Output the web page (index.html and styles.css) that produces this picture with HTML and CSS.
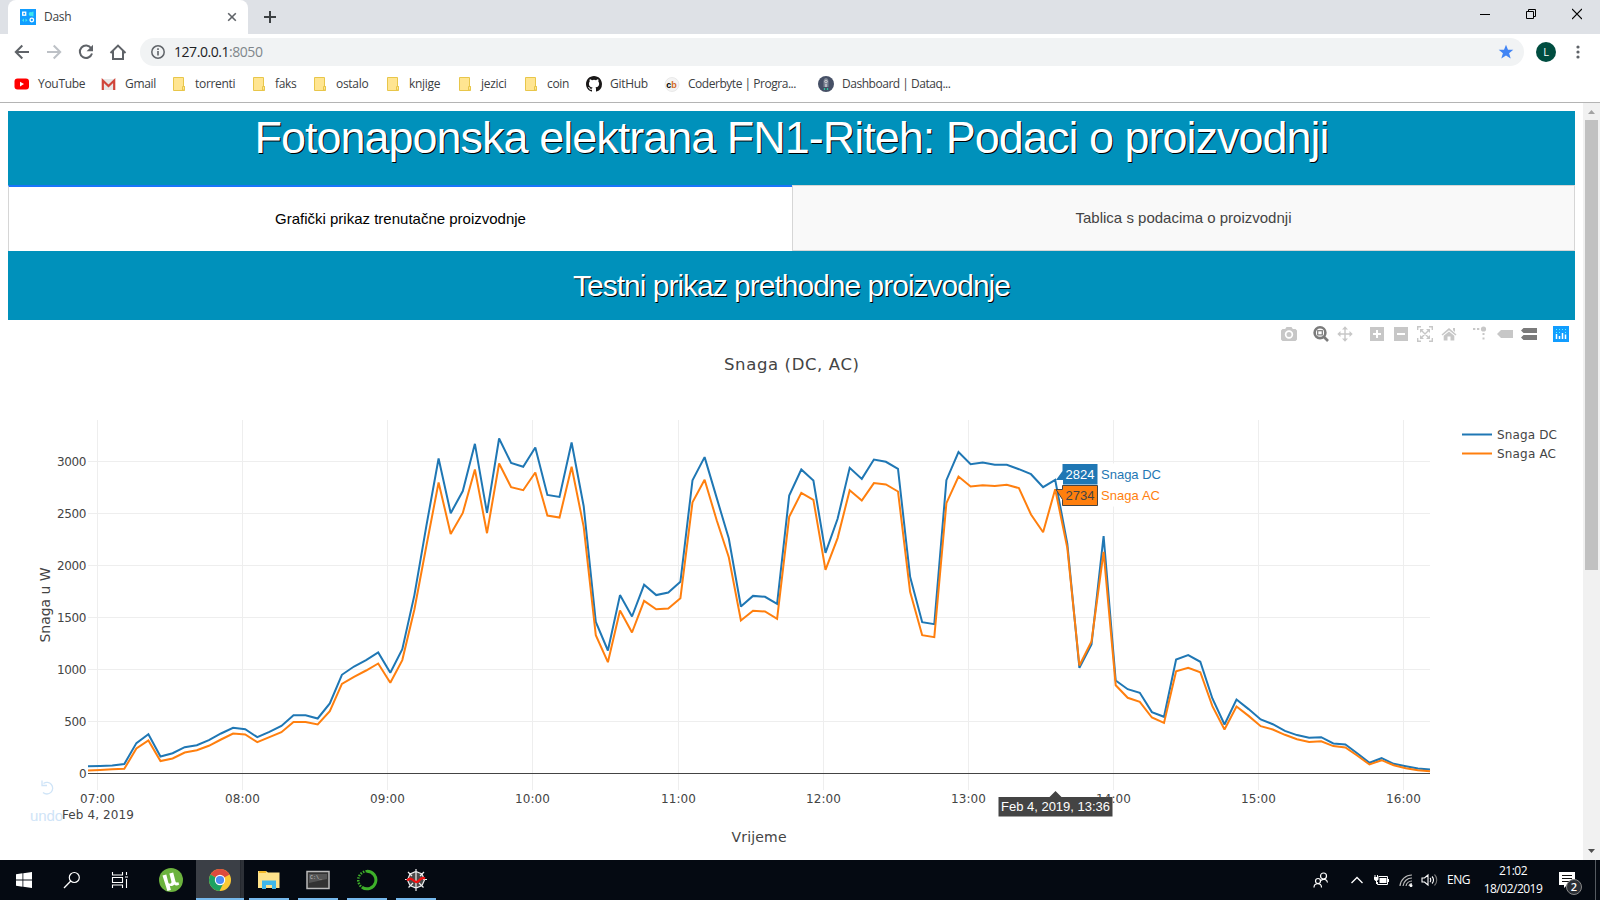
FILE: index.html
```html
<!DOCTYPE html>
<html lang="hr">
<head>
<meta charset="utf-8">
<title>Dash</title>
<link rel="stylesheet" href="styles.css">
</head>
<body>
<div class="tabstrip">
  <div class="browser-tab">
    <svg class="favicon" width="16" height="16" viewBox="0 0 16 16"><rect width="16" height="16" fill="#119dff"/><rect x="2.7" y="3.2" width="3" height="3" fill="none" stroke="#fff" stroke-width="1.3"/><path d="M13.5 2.5a2.5 2.5 0 0 0 0 5z" fill="#40e6f0"/><circle cx="10.6" cy="5" r="1.9" fill="#40e6f0"/><path d="M2 11.2l2-1.8v3.6zM7.5 11.2l-2-1.8v3.6z" fill="#40e6f0"/><circle cx="11.8" cy="11" r="1.8" fill="none" stroke="#fff" stroke-width="1.3"/></svg>
    <span class="tab-title">Dash</span>
    <svg width="10" height="10" viewBox="0 0 10 10"><path d="M1.2 1.2l7.6 7.6M8.8 1.2L1.2 8.8" stroke="#5f6368" stroke-width="1.6"/></svg>
  </div>
  <svg class="new-tab" width="14" height="14" viewBox="0 0 14 14"><path d="M7 1v12M1 7h12" stroke="#3c4043" stroke-width="2"/></svg>
  <div class="window-buttons">
    <svg width="10" height="12" viewBox="0 0 10 12"><path d="M0 6.5h10" stroke="#000"/></svg>
    <svg width="10" height="12" viewBox="0 0 10 12"><path d="M.5 3.500h7v7h-7zM2.500 3.500v-2h7v7h-2" fill="none" stroke="#000"/></svg>
    <svg width="10" height="12" viewBox="0 0 10 12"><path d="M0 1l10 10M10 1L0 11" stroke="#000" stroke-width="1.2"/></svg>
  </div>
</div>
<div class="toolbar">
  <svg width="16" height="16" viewBox="0 0 16 16"><path d="M15 8H2M8.300 1.500L1.800 8l6.500 6.500" fill="none" stroke="#5f6368" stroke-width="2"/></svg>
  <svg width="16" height="16" viewBox="0 0 16 16"><path d="M1 8h13M7.700 1.500L14.200 8l-6.500 6.500" fill="none" stroke="#bdc1c6" stroke-width="2"/></svg>
  <svg width="16" height="16" viewBox="0 0 16 16"><path d="M13.200 4.200A6.200 6.200 0 1 0 14 9.500" fill="none" stroke="#5f6368" stroke-width="2"/><path d="M15 .8v6.400H8.600z" fill="#5f6368"/></svg>
  <svg width="18" height="16" viewBox="0 0 18 16"><path d="M1.500 9L9 1.600 16.500 9M4 7v8h10V7" fill="none" stroke="#5f6368" stroke-width="2"/></svg>
  <div class="omnibox">
    <svg width="14" height="14" viewBox="0 0 14 14"><circle cx="7" cy="7" r="6.200" fill="none" stroke="#5f6368" stroke-width="1.500"/><path d="M7 6v4.500M7 3.300v1.700" stroke="#5f6368" stroke-width="1.600"/></svg>
    <span class="url">127.0.0.1<span class="port">:8050</span></span>
    <svg class="star" width="16" height="16" viewBox="0 0 16 16"><path d="M8 .8l2 5h5.300l-4.200 3.400 1.600 5.300L8 11.400l-4.700 3.100 1.600-5.300L.7 5.800H6z" fill="#4285f4"/></svg>
  </div>
  <span class="avatar">L</span>
  <svg width="4" height="14" viewBox="0 0 4 14" fill="#5f6368"><circle cx="2" cy="2" r="1.600"/><circle cx="2" cy="7" r="1.600"/><circle cx="2" cy="12" r="1.600"/></svg>
</div>
<div class="bookmarks">
  <div class="bookmark"><svg width="16" height="16" viewBox="0 0 16 16"><rect x=".5" y="2.500" width="14.500" height="11" rx="3" fill="#f00"/><path d="M6 5.800v4.600l4-2.300z" fill="#fff"/></svg><span class="wide">YouTube</span></div>
  <div class="bookmark"><svg width="16" height="16" viewBox="0 0 16 16"><rect x="1" y="3" width="13" height="11" fill="#e8e8e8"/><path d="M1.800 14V4.500L7.500 10l5.700-5.500V14" fill="none" stroke="#d0453a" stroke-width="2.200"/></svg><span class="wide">Gmail</span></div>
  <div class="bookmark"><svg width="16" height="16" viewBox="0 0 16 16"><use href="#folder"/></svg><span>torrenti</span></div>
  <div class="bookmark"><svg width="16" height="16" viewBox="0 0 16 16"><use href="#folder"/></svg><span>faks</span></div>
  <div class="bookmark"><svg width="16" height="16" viewBox="0 0 16 16"><use href="#folder"/></svg><span>ostalo</span></div>
  <div class="bookmark"><svg width="16" height="16" viewBox="0 0 16 16"><use href="#folder"/></svg><span>knjige</span></div>
  <div class="bookmark"><svg width="16" height="16" viewBox="0 0 16 16"><use href="#folder"/></svg><span>jezici</span></div>
  <div class="bookmark"><svg width="16" height="16" viewBox="0 0 16 16"><g id="folder"><path d="M.5 1.500h10v9h1v4H.5z" fill="#ffe591" stroke="#e8c64a"/><path d="M9.500 14v-3.500h2V14z" fill="#ffe591" stroke="#e8c64a"/></g></svg><span>coin</span></div>
  <div class="bookmark"><svg width="16" height="16" viewBox="0 0 16 16"><path fill="#191717" d="M8 0C3.580 0 0 3.580 0 8c0 3.540 2.290 6.530 5.470 7.590.4.070.55-.17.55-.38 0-.19-.01-.82-.01-1.490-2.010.37-2.530-.49-2.690-.94-.09-.23-.48-.94-.82-1.130-.28-.15-.68-.52-.01-.53.63-.01 1.080.58 1.230.82.72 1.210 1.870.87 2.330.66.070-.52.28-.87.51-1.070-1.780-.2-3.640-.89-3.640-3.950 0-.87.31-1.590.82-2.150-.08-.2-.36-1.020.08-2.120 0 0 .67-.21 2.200.82a7.600 7.600 0 0 1 4 0c1.530-1.040 2.200-.82 2.200-.82.44 1.100.16 1.920.08 2.120.51.56.82 1.270.82 2.150 0 3.070-1.870 3.750-3.650 3.950.29.25.54.73.54 1.480 0 1.070-.01 1.930-.01 2.200 0 .21.15.46.55.38A8.010 8.010 0 0 0 16 8c0-4.420-3.580-8-8-8z"/></svg><span class="wide">GitHub</span></div>
  <div class="bookmark"><svg width="16" height="16" viewBox="0 0 16 16"><circle cx="8" cy="8.500" r="7" fill="#f4f4f4" stroke="#ddd" stroke-width=".6"/><text x="2.300" y="11.800" class="cb">c<tspan fill="#d2691e">b</tspan></text></svg><span class="wide long">Coderbyte | Progra...</span></div>
  <div class="bookmark"><svg width="16" height="16" viewBox="0 0 16 16"><circle cx="8" cy="8" r="8" fill="#465066"/><path d="M5.500 11V5.500C5.500 3 7 2 8 2s2.500 1 2.500 3.500V11z" fill="#7c8494"/><circle cx="8" cy="5.500" r="1.300" fill="none" stroke="#ddd" stroke-width=".8"/><path d="M8 8v3" stroke="#eee"/><path d="M6.500 12v2M9.500 12v2" stroke="#2ec4a0" stroke-width="1.300"/></svg><span class="wide long">Dashboard | Dataq...</span></div>
</div>
<div class="viewport">
  <main class="page">
    <h1 class="title">Fotonaponska elektrana FN1-Riteh: Podaci o proizvodnji</h1>
    <div class="tabs">
      <div class="tab tab-selected">Grafički prikaz trenutačne proizvodnje</div>
      <div class="tab">Tablica s podacima o proizvodnji</div>
    </div>
    <h3 class="subtitle">Testni prikaz prethodne proizvodnje</h3>
    <div class="chart">
      <div class="modebar">
        <svg width="16" height="16" viewBox="0 0 16 16"><path fill-rule="evenodd" d="M1.500 3h2.700l1.300-2h5l1.300 2h2.700L16 4.500v9L14.500 15h-13L0 13.500v-9zM8 4.300a4.200 4.200 0 1 0 0 8.400 4.200 4.200 0 0 0 0-8.400zM8 6a2.500 2.500 0 1 1 0 5 2.500 2.500 0 0 1 0-5z"/></svg>
        <svg class="active gap" width="16" height="16" viewBox="0 0 16 16"><circle cx="7" cy="6.700" r="5.400" fill="none" stroke="currentColor" stroke-width="2.600"/><rect x="4.700" y="4.700" width="4.600" height="4.200" fill="none" stroke="currentColor" stroke-width="1.200"/><path d="M10.500 10.500l4.500 4.500" stroke="currentColor" stroke-width="2.600"/></svg>
        <svg width="16" height="16" viewBox="0 0 16 16"><path d="M8 .3L11 3.500H8.700v3.800h3.800V5L15.700 8l-3.200 3V8.700H8.700v3.800H11L8 15.700 5 12.500h2.300V8.700H3.500V11L.3 8l3.200-3v2.300h3.800V3.500H5z"/></svg>
        <svg class="gap" width="16" height="16" viewBox="0 0 16 16"><path fill-rule="evenodd" d="M1 1h14v14H1zM7 4v3H4v2h3v3h2V9h3V7H9V4z"/></svg>
        <svg width="16" height="16" viewBox="0 0 16 16"><path fill-rule="evenodd" d="M1 1h14v14H1zM4 7v2h8V7z"/></svg>
        <svg width="16" height="16" viewBox="0 0 16 16"><path d="M.7 4V.7H4M12 .7h3.300V4M15.300 12v3.300H12M4 15.300H.7V12M4 4l8 8M12 4l-8 8" fill="none" stroke="currentColor" stroke-width="1.400"/><path d="M3 3h4L3 7zM13 3v4L9 3zM13 13H9l4-4zM3 13V9l4 4z"/></svg>
        <svg width="16" height="16" viewBox="0 0 16 16"><path d="M8 2l7.500 6.500-1 1L8 4.300 1.500 9.500l-1-1zM12 2h2v4l-2-1.700zM2.700 9.800L8 5.500l5.300 4.300V14.500H9.500v-4h-3v4H2.700z"/></svg>
        <svg class="gap" width="16" height="16" viewBox="0 0 16 16"><path d="M0 2h2.300v2H0zM4 2h2.300v2H4zM9.500 7h2v2h-2zM9.500 11.500h2v2h-2z"/><circle cx="10.500" cy="3" r="2.600"/></svg>
        <svg width="16" height="16" viewBox="0 0 16 16"><path d="M0 8l4-4h12v8H4z"/></svg>
        <svg class="active" width="16" height="16" viewBox="0 0 16 16"><path d="M0 4.500L2.500 2H16v5H2.500zM0 11.500L2.500 9H16v5H2.500z"/></svg>
        <svg class="gap" width="16" height="16" viewBox="0 0 16 16"><rect width="16" height="16" fill="#119dff"/><path d="M3.500 8v5M6.500 10v3M9.500 7v6M12.500 8.500v4.500" stroke="#fff" stroke-width="1.500"/><path d="M3 3.500h1M6 3.500h1M9 3.500h1M12 3.500h1M3 6.500h1M6 6.500h1M12 6.500h1" stroke="#5ff" stroke-width="1.200"/></svg>
      </div>
      <svg class="plot" width="1583" height="510" viewBox="0 350 1583 510">
        <g id="grid"></g>
        <path d="M88 773.500H1430" stroke="#444"/>
        <polyline id="dc" class="line dc"/>
        <polyline id="ac" class="line ac"/>
        <g class="undo"><path d="M43 792.500a5.800 5.800 0 1 0 .5-9M42 780.500v5h5" fill="none" stroke="#cfe4f7" stroke-width="1.300"/><text x="30" y="821" textLength="33">undo</text></g>
        <g id="ticks" class="tick"><text x="62" y="818.500" textLength="72">Feb 4, 2019</text></g>
        <text class="chart-title" x="724" y="370" textLength="135">Snaga (DC, AC)</text>
        <text class="axis-title" x="731.500" y="842" textLength="55">Vrijeme</text>
        <text class="axis-title" transform="translate(50 642.500) rotate(-90)" textLength="75">Snaga u W</text>
        <path class="line dc" d="M1462 434.500h30"/><text class="tick" x="1497" y="439" textLength="60">Snaga DC</text>
        <path class="line ac" d="M1462 453.500h30"/><text class="tick" x="1497" y="458" textLength="59">Snaga AC</text>
        <g class="hover">
          <path d="M1098 463.500h67v43h-67z" fill="#fff"/>
          <path d="M1056 480l6.500-9v-7h35v20.500h-35v-4.500z" fill="#1f77b4"/>
          <path d="M1057 480h6v6h-4z" fill="#fff"/>
          <path d="M1056 489.500l6.500 0v-4h35v20h-35v-6z" fill="#ff7f0e" stroke="#444"/>
          <path d="M1058 485h4v4h-4z" fill="#fff"/>
          <text x="1065.500" y="479" fill="#fff" textLength="29">2824</text>
          <text x="1065.500" y="500" fill="#444" textLength="29">2734</text>
          <text x="1101" y="479" fill="#1f77b4" textLength="60">Snaga DC</text>
          <text x="1101" y="500" fill="#ff7f0e" textLength="59">Snaga AC</text>
          <path d="M1055.500 791l6 6h51v19.500H998.500V797h51z" fill="#444"/>
          <text x="1001" y="811" fill="#fff" textLength="109">Feb 4, 2019, 13:36</text>
        </g>
      </svg>
    </div>
  </main>
  <div class="scrollbar">
    <svg width="7" height="4" viewBox="0 0 7 4"><path d="M0 4l3.500-4L7 4z" fill="#a3a3a3"/></svg>
    <div class="thumb"></div>
    <svg width="7" height="4" viewBox="0 0 7 4"><path d="M0 0l3.500 4L7 0z" fill="#505050"/></svg>
  </div>
</div>
<div class="taskbar">
  <div class="task sys"><svg width="16" height="16" viewBox="0 0 16 16"><path d="M0 2.200l6.500-.9v6.300H0zM7.300 1.200L16 0v7.600H7.300zM0 8.400h6.500v6.300L0 13.800zM7.300 8.400H16V16l-8.700-1.200z" fill="#fff"/></svg></div>
  <div class="task sys"><svg width="18" height="18" viewBox="0 0 18 18"><circle cx="11.300" cy="6.500" r="5" fill="none" stroke="#fff" stroke-width="1.200"/><path d="M7.800 10L1 17" stroke="#fff" stroke-width="1.300"/></svg></div>
  <div class="task sys"><svg width="18" height="18" viewBox="0 0 18 18"><path d="M1.500 1v3h10V1M1.500 17v-3h10v3M1.500 6.500h10v5h-10zM15.500 1v3M15.500 8v9M14 6h3" fill="none" stroke="#fff" stroke-width="1.100"/></svg></div>
  <div class="task first"><svg width="24" height="24" viewBox="0 0 24 24"><circle cx="12" cy="12" r="12" fill="#6cb33e"/><path d="M3.500 7.500l3.800-1 2 8c.6 2 3.700 1.300 3.100-1l-2-8 3.800-1 2.300 9c.4 1.300 1.700 1.200 2.700.4l1 2.500c-1.500 1.500-3.700 1.500-5 .2-1 1.500-3 2-4.500 1l1.200 4.500-3.500.8z" fill="#fff"/></svg></div>
  <div class="task open focused"><svg width="22" height="22" viewBox="0 0 22 22"><circle cx="11" cy="11" r="11" fill="#fcc934"/><path d="M11 11L1.500 5.500A11 11 0 0 1 20.500 5.500z" fill="#dd4b3e"/><path d="M11 6h9.800a11 11 0 0 0-.3-.5L11 5z" fill="#dd4b3e"/><path d="M11 11L1.500 5.500A11 11 0 0 0 10.500 22l4-8z" fill="#1da261"/><circle cx="11" cy="11" r="5.200" fill="#fff"/><circle cx="11" cy="11" r="4.100" fill="#4c8bf5"/></svg></div>
  <div class="task open"><svg width="22" height="20" viewBox="0 0 22 20"><path d="M0 1h8l2 1.500h11.500V18H0z" fill="#ffe28a"/><path d="M1 1h7v2H1z" fill="#f5b928"/><path d="M4 19v-8.500h14V19h-4v-4H8v4z" fill="#3fb7ea"/></svg></div>
  <div class="task open"><svg width="24" height="20" viewBox="0 0 24 20"><rect x="1" y="1.500" width="22" height="17" fill="#333" stroke="#bbb" stroke-width="1.500"/><path d="M3 4h18v5L3 13z" fill="#555"/><text x="4" y="8.500" class="prompt">C:\_</text></svg></div>
  <div class="task open"><svg width="22" height="22" viewBox="0 0 22 22"><path d="M11 2.200a8.800 8.800 0 1 1-5 16" fill="none" stroke="#3eb02a" stroke-width="3"/><path d="M11 2.200a8.800 8.800 0 0 0-5 16" fill="none" stroke="#3eb02a" stroke-width="2.500" stroke-dasharray="1.500 1.200"/></svg></div>
  <div class="task open"><svg width="24" height="24" viewBox="0 0 24 24"><path d="M12 3.500l6 2.500 2.500 6-2.500 5.500-6 2.500-6-2.500L3.500 12 6 6z" fill="#4a4a4a"/><path d="M12 1v22M1 11.500h4M19 11.500h4M4 4l4 4M20 4l-4 4M4.500 19.500L9 15M19.500 19.500L15 15M12 3.500l6 2.500 2.500 6-2.500 5.500-6 2.500-6-2.500L3.500 12 6 6z" fill="none" stroke="#eee" stroke-width="1.200"/><path d="M3 12.500c2-2 4-2.500 6-.5s4 3 6 .5 4-3 6-2" fill="none" stroke="#f01010" stroke-width="2.300"/></svg></div>
  <div class="tray">
    <svg width="16" height="18" viewBox="0 0 16 18" fill="none" stroke="#fff" stroke-width="1.200"><circle cx="10.500" cy="5" r="3"/><circle cx="5" cy="10" r="2.500"/><path d="M1 16.500c0-5 7.500-5 7.500 0M8 9.500c2-2 6-1.500 6.500 2"/></svg>
    <svg width="12" height="8" viewBox="0 0 12 8"><path d="M.5 7L6 1.500 11.500 7" fill="none" stroke="#fff" stroke-width="1.300"/></svg>
    <svg width="16" height="12" viewBox="0 0 16 12"><path d="M5.500 2.500h9v8h-10V8" fill="none" stroke="#fff"/><path d="M6.500 4h7v5h-7zM15 5h1v3h-1zM1 3h4.500v2.500L4 7H2.500L1 5.500zM1.500 1h1v2h-1zM4 1h1v2H4zM3 7h1v3H3z" fill="#fff"/></svg>
    <svg width="14" height="14" viewBox="0 0 14 14" fill="none" stroke="#bbb" stroke-width="1.200"><path d="M1 13A12 12 0 0 1 13 2M4 13a9 9 0 0 1 9-8M7 13a6 6 0 0 1 6-5M10 13a3 3 0 0 1 3-2.500"/><circle cx="12" cy="12.500" r=".9" fill="#fff" stroke="#fff"/></svg>
    <svg width="17" height="14" viewBox="0 0 17 14" fill="none" stroke="#fff" stroke-width="1.100"><path d="M1 5h2.500L7 2v10L3.500 9H1zM9 5c1 1 1 3 0 4M11 3.500c2 2 2 5 0 7"/><path d="M13.500 1.500c3 3 3 8 0 11" stroke="#777"/></svg>
    <span class="lang">ENG</span>
    <div class="clock"><span>21:02</span><span>18/02/2019</span></div>
    <div class="notify"><svg width="16" height="16" viewBox="0 0 16 16"><path d="M0 0h16v13H8l-3 3v-3H0z" fill="#fff"/><path d="M3 3.500h10M3 6.500h10M3 9.500h7" stroke="#111"/></svg><span class="count">2</span></div>
  </div>
</div>
<script src="chart.js"></script>
</body>
</html>
```
FILE: styles.css
```css
* { box-sizing: border-box; }
body { margin: 0; width: 1600px; height: 900px; overflow: hidden; background: #fff; font-family: "Open Sans", "Noto Sans", sans-serif; font-size: 12px; color: #3c4043; }
svg { display: block; flex: none; }

.tabstrip { height: 34px; background: #dee1e6; display: flex; align-items: flex-start; padding-left: 8px; }
.browser-tab { width: 240px; height: 34px; background: #fff; border-radius: 8px 8px 0 0; display: flex; align-items: center; padding: 0 11px 0 12px; }
.tab-title { flex: 1; margin-left: 8px; padding-bottom: 1px; letter-spacing: -.3px; }
.new-tab { margin: 10px 0 0 15px; }
.window-buttons { margin-left: auto; display: flex; gap: 36px; padding: 8px 18px 0 0; }

.toolbar { height: 36px; display: flex; align-items: center; padding: 0 20px 0 14px; }
.toolbar > svg { margin-right: 16px; }
.toolbar > svg:nth-of-type(3) { margin-right: 15px; }
.toolbar > svg:nth-of-type(4) { margin-right: 13px; }
.toolbar > svg:last-child { margin: 0 0 0 20px; }
.omnibox { flex: 1; height: 28px; border-radius: 14px; background: #f1f3f4; display: flex; align-items: center; padding: 0 10px 0 11px; }
.url { margin-left: 9px; padding-bottom: 1px; font-size: 14px; letter-spacing: -.45px; color: #202124; }
.port { color: #80868b; }
.star { margin-left: auto; }
.avatar { width: 20px; height: 20px; border-radius: 50%; background: #004d40; color: #fff; font-size: 11px; line-height: 20px; text-align: center; margin-left: 12px; }

.bookmarks { height: 33px; border-bottom: 1px solid #b4b4b4; display: grid; align-items: center; padding: 0 0 4px 14px; grid-template-columns: 87px 72px 80px 61px 73px 72px 66px 61px 78px 154px 132px; }
.bookmark { display: flex; align-items: center; gap: 6px; white-space: nowrap; letter-spacing: -.3px; }
.bookmark span { padding-bottom: 1px; }
.bookmark .wide { margin-left: 2px; }
.bookmark .long { letter-spacing: -.47px; }
.cb { font: bold 9px "Liberation Sans", sans-serif; letter-spacing: 0; }

.viewport { height: 757px; display: flex; }
.page { width: 1583px; padding-top: 8px; font-family: "Liberation Sans", Arial, sans-serif; }
.title, .subtitle { margin: 0 8px; background: #0091bb; color: #fff; font-weight: 400; letter-spacing: -1px; text-align: center; text-shadow: 1px 1px 0 #000; }
.title { height: 74px; font-size: 45px; line-height: 54px; }
.subtitle { height: 69px; font-size: 30px; line-height: 69px; }
.tabs { display: grid; grid-template-columns: 784px 1fr; height: 66px; margin: 0 8px; }
.tab { border: 1px solid #d6d6d6; background: #f9f9f9; color: #444; font-size: 15px; line-height: 64px; text-align: center; }
.tab-selected { background: #fff; color: #000; border-top: 2px solid #1975fa; border-bottom: 0; border-right: 0; }
.modebar { height: 30px; display: flex; justify-content: flex-end; align-items: center; gap: 8px; padding: 0 14px 2px 0; color: #c7c7c7; fill: currentColor; }
.modebar .gap { margin-left: 8px; }
.modebar .active { color: #7b7b7b; }

.line { fill: none; stroke-width: 2; stroke-miterlimit: 2; }
.dc { stroke: #1f77b4; }
.ac { stroke: #ff7f0e; }
.grid-line { stroke: #eee; }
.tick, .chart-title, .axis-title { font-family: "DejaVu Sans", Verdana, sans-serif; fill: #444; }
.tick { font-size: 12px; }
.chart-title { font-size: 16.5px; }
.axis-title { font-size: 14px; }
.undo text { font-size: 15px; fill: #cfe4f7; }
.hover { font-size: 13px; }

.scrollbar { width: 17px; background: #f1f1f1; display: flex; flex-direction: column; align-items: center; padding: 7px 0 7px; }
.thumb { width: 13px; height: 450px; margin: 6px 0 auto; background: #c1c1c1; }

.taskbar { height: 40px; background: #050a12; color: #fff; display: flex; }
.task { width: 48px; margin-right: 1px; display: flex; align-items: center; justify-content: center; position: relative; }
.task.sys { margin-right: 0; }
.task.first { margin-left: 3px; }
.task.open::after { content: ""; position: absolute; bottom: 0; left: 4px; width: 40px; height: 2px; background: #76b9ed; }
.task.focused { background: linear-gradient(90deg, #3b3f46 44px, #1d2127 44px, #2d3137 45px); }
.task.focused::after { left: 0; width: 48px; }
.prompt { font: 5px "Liberation Mono", monospace; fill: #ccc; }
.tray { margin-left: auto; display: flex; align-items: center; }
.tray > svg:nth-of-type(1) { margin-right: 22px; }
.tray > svg:nth-of-type(2) { margin-right: 10px; }
.tray > svg:nth-of-type(3) { margin-right: 10px; }
.tray > svg:nth-of-type(4) { margin-right: 8px; }
.lang { width: 23px; margin-left: 9px; margin-right: 1px; padding-bottom: 1px; letter-spacing: -.5px; }
.clock { width: 84px; display: flex; flex-direction: column; align-items: center; line-height: 18px; letter-spacing: -.5px; }
.notify { position: relative; width: 41px; height: 40px; padding: 12px 0 0 4px; border-right: 1px solid #555a60; margin-right: 4px; }
.count { position: absolute; left: 11px; top: 19px; width: 16px; height: 16px; border-radius: 50%; background: #2b2f35; border: 1px solid #888; font-size: 11px; line-height: 14px; text-align: center; font-weight: 600; }
```
FILE: chart.js
```js
// Power readings in watts, one every five minutes from 06:56.
const dc = [70,73,77,90,292,378,163,195,253,272,320,385,439,426,349,400,458,561,561,529,673,949,1029,1090,1163,968,1195,1715,2388,3029,2503,2715,3170,2506,3221,2987,2949,3135,2679,2660,3183,2570,1458,1183,1715,1510,1814,1715,1740,1843,2820,3042,2650,2260,1606,1708,1699,1631,2673,2923,2817,2122,2449,2939,2833,3019,2997,2929,1891,1455,1436,2820,3090,2974,2990,2968,2968,2926,2878,2753,2824,2211,1016,1240,2282,894,811,776,590,545,1096,1138,1074,721,471,712,619,519,474,410,369,343,349,288,279,192,103,147,93,70,48,38];
const ac = [29,35,40,45,240,317,119,144,202,224,266,327,385,375,301,349,397,494,494,471,599,862,929,990,1058,872,1090,1577,2195,2798,2304,2506,2923,2311,2981,2753,2724,2894,2481,2461,2949,2372,1330,1070,1567,1356,1660,1580,1586,1686,2609,2824,2436,2080,1471,1564,1558,1487,2468,2699,2631,1958,2263,2724,2625,2792,2779,2712,1747,1330,1311,2599,2856,2760,2772,2763,2776,2744,2490,2320,2734,2170,1038,1269,2131,849,728,689,538,487,984,1016,974,647,423,644,554,455,423,372,330,304,311,263,250,170,87,128,80,51,32,22];
const points = v => v.map((w, i) => (88 + i * 12.09).toFixed(1) + "," + (773.5 - w * 0.104).toFixed(1)).join(" ");
document.getElementById("dc").setAttribute("points", points(dc));
document.getElementById("ac").setAttribute("points", points(ac));

const grid = document.getElementById("grid");
const ticks = document.getElementById("ticks");
const add = (parent, name, attrs, text) => {
  const el = document.createElementNS("http://www.w3.org/2000/svg", name);
  for (const k in attrs) el.setAttribute(k, attrs[k]);
  if (text) el.textContent = text;
  parent.appendChild(el);
};
for (let h = 7; h <= 16; h++) {
  const x = Math.floor(97.6 + (h - 7) * 145.1) + 0.5;
  add(grid, "path", { class: "grid-line", d: `M${x} 420V790` });
  add(ticks, "text", { x: x - 17.5, y: 803, textLength: 35 }, String(h).padStart(2, "0") + ":00");
}
for (let w = 0; w <= 3000; w += 500) {
  const y = 773.5 - w * 0.104;
  if (w) add(grid, "path", { class: "grid-line", d: `M88 ${y}H1430` });
  const len = String(w).length * 7.4;
  add(ticks, "text", { x: 86.5 - len, y: y + 4, textLength: len }, String(w));
}
```
